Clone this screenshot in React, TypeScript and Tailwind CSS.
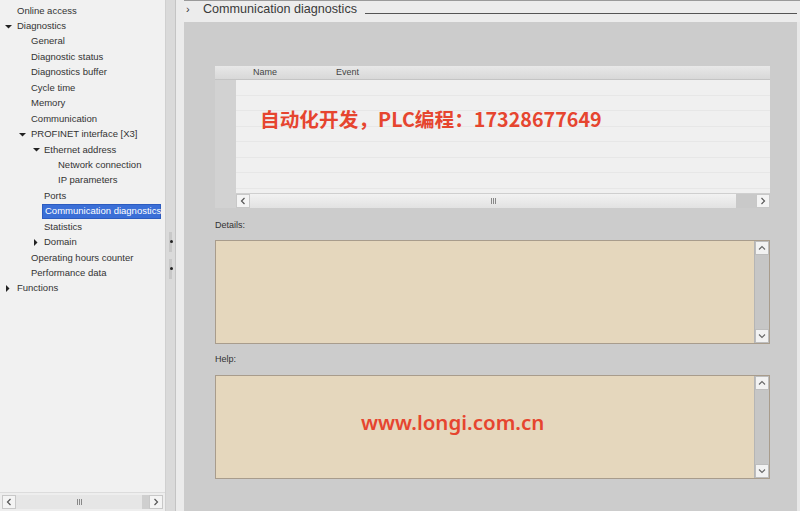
import React from "react";

type Item = { label: string; level: number; arrow?: "down" | "right"; selected?: boolean };

const items: Item[] = [
  { label: "Online access", level: 0 },
  { label: "Diagnostics", level: 0, arrow: "down" },
  { label: "General", level: 1 },
  { label: "Diagnostic status", level: 1 },
  { label: "Diagnostics buffer", level: 1 },
  { label: "Cycle time", level: 1 },
  { label: "Memory", level: 1 },
  { label: "Communication", level: 1 },
  { label: "PROFINET interface [X3]", level: 1, arrow: "down" },
  { label: "Ethernet address", level: 2, arrow: "down" },
  { label: "Network connection", level: 3 },
  { label: "IP parameters", level: 3 },
  { label: "Ports", level: 2 },
  { label: "Communication diagnostics", level: 2, selected: true },
  { label: "Statistics", level: 2 },
  { label: "Domain", level: 2, arrow: "right" },
  { label: "Operating hours counter", level: 1 },
  { label: "Performance data", level: 1 },
  { label: "Functions", level: 0, arrow: "right" },
];

const textLeft = ["pl-[17px]", "pl-[31px]", "pl-[44px]", "pl-[58px]"];
const arrowLeft = ["left-[5px]", "left-[19px]", "left-[33px]", "left-[47px]"];

function Arrow({ dir }: { dir: "down" | "right" }) {
  return dir === "down" ? (
    <svg width="7" height="5" viewBox="0 0 7 5">
      <path d="M0 1 L7 1 L3.5 4.5 Z" fill="#222" />
    </svg>
  ) : (
    <svg width="5" height="7" viewBox="0 0 5 7">
      <path d="M1 0 L4.5 3.5 L1 7 Z" fill="#222" />
    </svg>
  );
}

function HScrollBtn({ dir }: { dir: "l" | "r" }) {
  return (
    <div className="w-[14px] h-[14px] flex items-center justify-center bg-[#f4f4f4] border border-[#c8c8c8]">
      <svg width="6" height="8" viewBox="0 0 6 8">
        {dir === "l" ? (
          <path d="M4.5 1 L1.5 4 L4.5 7" stroke="#555" strokeWidth="1.2" fill="none" />
        ) : (
          <path d="M1.5 1 L4.5 4 L1.5 7" stroke="#555" strokeWidth="1.2" fill="none" />
        )}
      </svg>
    </div>
  );
}

function VScrollBtn({ dir }: { dir: "u" | "d" }) {
  return (
    <div className="w-[14px] h-[14px] flex items-center justify-center bg-[#f2f2f2] border border-[#bdbdbd]">
      <svg width="8" height="6" viewBox="0 0 8 6">
        {dir === "u" ? (
          <path d="M1 4.5 L4 1.5 L7 4.5" stroke="#666" strokeWidth="1.1" fill="none" />
        ) : (
          <path d="M1 1.5 L4 4.5 L7 1.5" stroke="#666" strokeWidth="1.1" fill="none" />
        )}
      </svg>
    </div>
  );
}

function Grip() {
  return (
    <div className="flex gap-[1px]">
      <div className="w-[1px] h-[6px] bg-[#888]" />
      <div className="w-[1px] h-[6px] bg-[#888]" />
      <div className="w-[1px] h-[6px] bg-[#888]" />
    </div>
  );
}

function TextBox({ children }: { children?: React.ReactNode }) {
  return (
    <div className="relative h-[104px] flex border border-[#a89c8c] bg-[#e5d7bd]">
      <div className="flex-1 relative">{children}</div>
      <div className="w-[15px] bg-[#c6c6c6] flex flex-col justify-between border-l border-[#b5b5b5]">
        <VScrollBtn dir="u" />
        <VScrollBtn dir="d" />
      </div>
    </div>
  );
}

export default function App() {
  return (
    <div
      className="w-[800px] h-[511px] flex overflow-hidden bg-[#cccccc] text-[#333]"
      style={{ fontFamily: '"Liberation Sans", Arial, sans-serif' }}
    >
      {/* Left tree */}
      <div className="w-[166px] h-full flex flex-col bg-[#f1f1f1] border-r border-[#d0d0d0]">
        <div className="flex-1 pt-[3px]">
          {items.map((it, i) => (
            <div key={i} className={`relative h-[15.45px] flex items-center text-[9.5px] ${textLeft[it.level]}`}>
              {it.arrow && (
                <div className={`absolute top-0 h-full flex items-center ${arrowLeft[it.level]}`}>
                  <Arrow dir={it.arrow} />
                </div>
              )}
              {it.selected ? (
                <span className="-ml-[2px] pl-[2px] pr-[1px] w-[119px] h-[15px] flex items-center bg-[#3b6fd7] text-white border border-[#2c5cc0] whitespace-nowrap">
                  {it.label}
                </span>
              ) : (
                <span className="whitespace-nowrap">{it.label}</span>
              )}
            </div>
          ))}
        </div>
        <div className="h-[19px] border-t border-[#dcdcdc] bg-[#eeeeee] flex items-center px-[2px] gap-0">
          <HScrollBtn dir="l" />
          <div className="flex-1 h-[14px] bg-[#e6e6e6] flex items-center justify-center">
            <Grip />
          </div>
          <div className="w-[7px] h-[14px] bg-[#cfcfcf]" />
          <HScrollBtn dir="r" />
        </div>
      </div>

      {/* Splitter */}
      <div className="relative w-[10px] h-full bg-[#dadada] border-r border-[#c4c4c4]">
        <div className="absolute left-[3px] top-[232px] w-[3px] h-[20px] bg-[#c8c8c8]" />
        <div className="absolute left-[4px] top-[240px] w-[3px] h-[3px] rounded-full bg-[#222]" />
        <div className="absolute left-[3px] top-[259px] w-[3px] h-[20px] bg-[#c8c8c8]" />
        <div className="absolute left-[4px] top-[267px] w-[3px] h-[3px] rounded-full bg-[#222]" />
      </div>
      <div className="w-[8px] h-full bg-[#ebebeb]" />

      {/* Main */}
      <div className="flex-1 h-full flex flex-col">
        <div className="h-[22px] flex items-start bg-[#ececec] border-t border-[#9a9a9a]">
          <span className="ml-[2px] mt-[2px] w-[17px] text-[11px] leading-[12px] text-[#333]">›</span>
          <span className="text-[12.6px] leading-[13px] mt-[2px] text-[#3a3a3a] whitespace-nowrap">
            Communication diagnostics
          </span>
          <div className="flex-1 ml-[8px] mr-[3px] mt-[12px] h-[1px] bg-[#555]" />
        </div>
        <div className="flex-1 flex">
          <div className="flex-1 pl-[31px] pr-[27px] pt-[44px] flex flex-col">
            {/* Table */}
            <div className="flex flex-col">
              <div className="h-[14px] flex items-center bg-gradient-to-b from-[#e8e8e8] to-[#d8d8d8] border-b border-[#c4c4c4] text-[9px] text-[#444]">
                <span className="ml-[38px] w-[83px]">Name</span>
                <span>Event</span>
              </div>
              <div className="flex">
                <div className="w-[21px] bg-[#d2d2d2]" />
                <div className="flex-1 relative bg-[#f0f0f0] h-[113px]">
                  {[0, 1, 2, 3, 4, 5, 6].map((r) => (
                    <div key={r} className="h-[15.5px] border-b border-[#e7e7e7]" />
                  ))}
                  <div
                    className="absolute left-[24px] top-[27px] text-[19.7px] leading-[24px] font-bold text-[#e6452f] whitespace-nowrap"
                    style={{ fontFamily: '"Noto Sans CJK SC", "Noto Sans", sans-serif' }}
                  >
                    自动化开发，PLC编程：17328677649
                  </div>
                </div>
              </div>
              <div className="flex">
                <div className="w-[21px] bg-[#d2d2d2]" />
                <div className="flex-1 h-[15px] flex items-center bg-[#e4e4e4] border-t border-[#cfcfcf]">
                  <HScrollBtn dir="l" />
                  <div className="flex-1 h-[14px] bg-gradient-to-b from-[#f2f2f2] to-[#e2e2e2] flex items-center justify-center">
                    <Grip />
                  </div>
                  <div className="w-[20px] h-[14px] bg-[#c9c9c9]" />
                  <HScrollBtn dir="r" />
                </div>
              </div>
            </div>

            <div className="mt-[11px] h-[12px] text-[9px] leading-[12px] text-[#333]">Details:</div>
            <div className="mt-[9px]">
              <TextBox />
            </div>
            <div className="mt-[9px] h-[12px] text-[9px] leading-[12px] text-[#333]">Help:</div>
            <div className="mt-[10px]">
              <TextBox>
                <div
                  className="absolute left-[145px] top-[33px] text-[20.5px] leading-[26px] font-semibold text-[#e6452f] whitespace-nowrap"
                  style={{ fontFamily: '"Noto Sans", "Open Sans", sans-serif' }}
                >
                  www.longi.com.cn
                </div>
              </TextBox>
            </div>
          </div>
          <div className="w-[3px] h-full bg-[#e8e8e8]" />
        </div>
      </div>
    </div>
  );
}
